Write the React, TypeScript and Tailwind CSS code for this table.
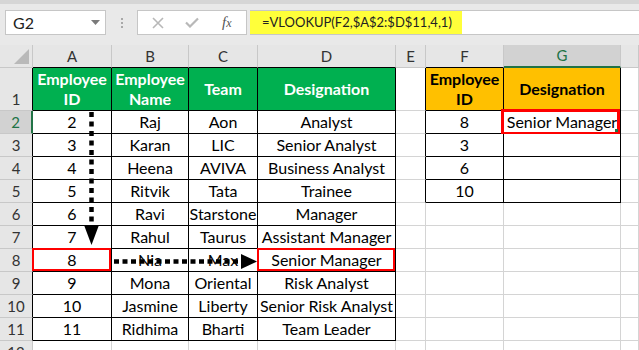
import type { ReactNode } from "react";

const COL_LABELS = ["", "A", "B", "C", "D", "E", "F", "G", ""];

const employees = [
  ["2", "Raj", "Aon", "Analyst"],
  ["3", "Karan", "LIC", "Senior Analyst"],
  ["4", "Heena", "AVIVA", "Business Analyst"],
  ["5", "Ritvik", "Tata", "Trainee"],
  ["6", "Ravi", "Starstone", "Manager"],
  ["7", "Rahul", "Taurus", "Assistant Manager"],
  ["8", "Nia", "Max", "Senior Manager"],
  ["9", "Mona", "Oriental", "Risk Analyst"],
  ["10", "Jasmine", "Liberty", "Senior Risk Analyst"],
  ["11", "Ridhima", "Bharti", "Team Leader"],
];

const lookups = [
  ["8", "Senior Manager"],
  ["3", ""],
  ["6", ""],
  ["10", ""],
];

// row/col here are sheet coords: row 1..12, col 1 = A ... 8 = H
const inMain = (r: number, c: number) => r >= 1 && r <= 11 && c >= 1 && c <= 4;
const inLookup = (r: number, c: number) => r >= 1 && r <= 5 && c >= 6 && c <= 7;
const inTable = (r: number, c: number) => inMain(r, c) || inLookup(r, c);

const valueAt = (r: number, c: number): string => {
  if (r >= 2 && r <= 11 && c >= 1 && c <= 4) return employees[r - 2][c - 1];
  if (r >= 2 && r <= 5 && c >= 6 && c <= 7) return lookups[r - 2][c - 6];
  return "";
};

const headerLabel: Record<number, ReactNode> = {
  1: (
    <>
      Employee
      <br />
      ID
    </>
  ),
  2: (
    <>
      Employee
      <br />
      Name
    </>
  ),
  3: "Team",
  4: "Designation",
  6: (
    <>
      Employee
      <br />
      ID
    </>
  ),
  7: "Designation",
};

function FormulaBar() {
  return (
    <div className="flex h-[45px] items-start border-t-[4px] border-[#d6d6d6] bg-[#e9e9e9] pl-[5px] pt-[6px]">
      <div className="flex h-[25px] w-[101px] items-center justify-between border border-[#c6c6c6] bg-white pl-[7px] pr-[5px] text-[16px] text-[#222]">
        <span>G2</span>
        <svg width="9" height="5" viewBox="0 0 9 5">
          <path d="M0 0h9L4.5 5z" fill="#7a7a7a" />
        </svg>
      </div>
      <div className="flex h-[25px] w-[31px] flex-col items-center justify-center gap-[2px]">
        <span className="h-[2px] w-[2px] bg-[#a8a8a8]" />
        <span className="h-[2px] w-[2px] bg-[#a8a8a8]" />
        <span className="h-[2px] w-[2px] bg-[#a8a8a8]" />
      </div>
      <div className="flex h-[25px] w-[110px] items-center border border-[#c6c6c6] bg-white">
        <svg className="ml-[14px]" width="12" height="12" viewBox="0 0 12 12">
          <path d="M1 1l10 10M11 1L1 11" stroke="#b8b8b8" strokeWidth="1.6" />
        </svg>
        <svg className="ml-[21px]" width="14" height="11" viewBox="0 0 14 11">
          <path d="M1 5.5l4 4L13 1.5" stroke="#b8b8b8" strokeWidth="2.2" fill="none" />
        </svg>
        <span className="ml-[23px] font-['Liberation_Serif',serif] text-[15px] italic text-[#555]">
          f<span className="text-[12px]">x</span>
        </span>
      </div>
      <div className="ml-[3px] flex h-[25px] flex-1 border-y border-[#c6c6c6] bg-white">
        <div className="flex h-full w-[212px] items-center bg-[#ffff3a] pl-[12px] text-[13px] text-[#222]">
          =VLOOKUP(F2,$A$2:$D$11,4,1)
        </div>
      </div>
    </div>
  );
}

function ColumnHeader({ c }: { c: number }) {
  if (c === 0) {
    return (
      <div className="relative border-b border-r border-[#c8c8c8] bg-[#e6e6e6]">
        <svg className="absolute bottom-[3px] right-[3px]" width="15" height="15" viewBox="0 0 15 15">
          <path d="M15 0v15H0z" fill="#b9b9b9" />
        </svg>
      </div>
    );
  }
  const selected = c === 7;
  return (
    <div
      className={
        "flex items-center justify-center border-r border-[#c8c8c8] text-[15px] " +
        (selected
          ? "border-b-2 border-b-[#217346] bg-[#d2d2d2] text-[#217346]"
          : inTable(1, c)
            ? "border-b border-b-black bg-[#e6e6e6] text-[#333]"
            : "border-b border-b-[#c8c8c8] bg-[#e6e6e6] text-[#333]")
      }
    >
      {COL_LABELS[c]}
    </div>
  );
}

function RowHeader({ r }: { r: number }) {
  const selected = r === 2;
  return (
    <div
      className={
        "flex items-center justify-center border-b border-b-[#c8c8c8] text-[15px] " +
        (r === 1 ? "pt-[20px] " : "") +
        (selected
          ? "border-r-2 border-r-[#217346] bg-[#d2d2d2] text-[#217346]"
          : r <= 11
            ? "border-r border-r-black bg-[#e6e6e6] text-[#333]"
            : "border-r border-r-[#c8c8c8] bg-[#e6e6e6] text-[#333]")
      }
    >
      <span>{r}</span>
    </div>
  );
}

function DataCell({ r, c }: { r: number; c: number }) {
  const rightDark = inTable(r, c) || inTable(r, c + 1);
  const bottomDark = inTable(r, c) || inTable(r + 1, c);
  let fill = "bg-white text-black";
  if (r === 1 && inMain(r, c)) fill = "bg-[#00b050] text-white font-bold leading-[20px]";
  if (r === 1 && inLookup(r, c)) fill = "bg-[#ffc000] text-black font-bold leading-[20px]";

  const redBox = (r === 8 && (c === 1 || c === 4)) || (r === 2 && c === 7);

  return (
    <div
      className={
        "relative flex items-center justify-center whitespace-nowrap text-center text-[16px] border-r border-b " +
        (rightDark ? "border-r-black " : "border-r-[#d4d4d4] ") +
        (bottomDark ? "border-b-black " : "border-b-[#d4d4d4] ") +
        fill
      }
    >
      {r === 1 ? headerLabel[c] : valueAt(r, c)}
      {redBox && r === 8 && (
        <span className="absolute -left-px -top-px bottom-0 right-0 border-2 border-[#ff0000]" />
      )}
      {redBox && r === 2 && (
        <>
          <span className="absolute -left-[3px] -top-[2px] -bottom-[2px] right-0 border-[3px] border-[#ff0000]" />
          <span className="absolute bottom-[1px] right-[2px] h-[3px] w-[3px] bg-[#217346]" />
        </>
      )}
    </div>
  );
}

export default function App() {
  const rows = Array.from({ length: 12 }, (_, i) => i + 1);
  const cols = Array.from({ length: 9 }, (_, i) => i);

  return (
    <div className="relative h-[350px] w-[639px] overflow-hidden bg-white font-['Lato',sans-serif]">
      <FormulaBar />
      <div className="grid grid-cols-[33px_79px_77px_69px_138px_30px_78px_117px_18px] grid-rows-[23px_43px_repeat(11,23px)]">
        {cols.map((c) => (
          <ColumnHeader key={`h${c}`} c={c} />
        ))}
        {rows.map((r) =>
          cols.map((c) =>
            c === 0 ? <RowHeader key={`${r}-${c}`} r={r} /> : <DataCell key={`${r}-${c}`} r={r} c={c} />,
          ),
        )}
      </div>

      {/* dotted lookup arrows */}
      <svg className="pointer-events-none absolute left-0 top-0" width="639" height="350">
        <line x1="91.5" y1="112" x2="91.5" y2="225" stroke="#000" strokeWidth="4.5" strokeDasharray="5 4.5" />
        <path d="M84 225h15l-7.5 20z" fill="#000" />
        <line x1="114" y1="261.5" x2="242" y2="261.5" stroke="#000" strokeWidth="4.5" strokeDasharray="5 3.5" />
        <path d="M241 254v15l16-7.5z" fill="#000" />
      </svg>
    </div>
  );
}
